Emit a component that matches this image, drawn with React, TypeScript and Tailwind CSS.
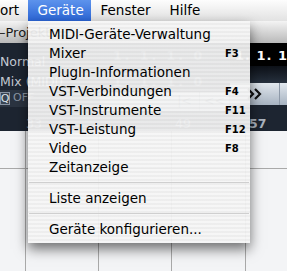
const font = "font-['DejaVu_Sans','Liberation_Sans',sans-serif]";

type MenuEntry = { label: string; key?: string } | 'sep';

const entries: MenuEntry[] = [
  { label: 'MIDI-Geräte-Verwaltung' },
  { label: 'Mixer', key: 'F3' },
  { label: 'PlugIn-Informationen' },
  { label: 'VST-Verbindungen', key: 'F4' },
  { label: 'VST-Instrumente', key: 'F11' },
  { label: 'VST-Leistung', key: 'F12' },
  { label: 'Video', key: 'F8' },
  { label: 'Zeitanzeige' },
  'sep',
  { label: 'Liste anzeigen' },
  'sep',
  { label: 'Geräte konfigurieren...' },
];

function MenuBar() {
  const item = 'h-full px-[9.5px] leading-[21px]';
  return (
    <div className="flex h-[21px] items-start bg-gradient-to-b from-[#fdfdfd] to-[#e2e2e2] text-[13.5px] text-black">
      <div className="h-full w-[28px] leading-[21px]">ort</div>
      <div className={`${item} h-[20px] w-[63px] bg-gradient-to-b from-[#5d93ec] to-[#2b65d6] text-center text-white`}>Geräte</div>
      <div className={item}>Fenster</div>
      <div className={item}>Hilfe</div>
    </div>
  );
}

function TitleBar() {
  return (
    <div className="flex h-[22px] items-center bg-gradient-to-b from-[#f4f4f4] to-[#b9b9b9] pt-[2px] text-[13px] text-[#1a1a1a]">
      <span className="-ml-[1px] whitespace-nowrap">–Projekt</span>
    </div>
  );
}

function TransportButton({ children, w }: { children: React.ReactNode; w: string }) {
  return (
    <div className={`flex h-full items-center justify-center border-r border-[#8d99a8] ${w}`}>{children}</div>
  );
}

function DarkBand() {
  return (
    <div className="flex h-[88px] bg-[#1d2531] text-[12.5px]">
      {/* left column */}
      <div className="flex w-[100px] flex-col text-[#c4cad3]">
        <div className="mt-[7px] h-[24px] whitespace-nowrap leading-[24px]">Normal</div>
        <div className="h-[16px] whitespace-nowrap leading-[16px]">Mix (MIDI)</div>
        <div className="flex h-[17px] items-center gap-[3px] bg-[#2b3441] text-[11px]">
          <span className="flex h-[13px] w-[10px] items-center justify-center border border-[#8793a3] bg-[#3a4553] leading-none text-[#dfe4ea]">Q</span>
          <span className="text-[#8c96a3]">OFF</span>
        </div>
        <div className="flex h-[24px] items-end pl-[26px] text-[#8e98a5]">
          <span className="leading-[14px]">33</span>
        </div>
      </div>
      {/* middle column, mostly under the menu */}
      <div className="flex flex-1 flex-col text-[#6f7a88]">
        <div className="mt-[4px] h-[18px] whitespace-nowrap pl-[13px] font-bold leading-[18px] tracking-[3px]">1. 1. 1. 0</div>
        <div className="h-[9px]" />
        <div className="h-[20px] whitespace-nowrap pl-[13px] font-bold leading-[20px] tracking-[3px]">1. 1. 1. 0</div>
        <div className="flex h-[22px] justify-end bg-gradient-to-b from-[#dfe5ec] to-[#aab6c3] text-[#5d6875]">
          <TransportButton w="w-[30px]">|&lt;</TransportButton>
          <TransportButton w="w-[30px]">&lt;&lt;</TransportButton>
        </div>
        <div className="flex h-[26px] items-end pl-[75px] text-[#8e98a5]">
          <span className="leading-[14px]">49</span>
        </div>
      </div>
      {/* right column */}
      <div className="flex w-[57px] flex-col">
        <div className="flex h-[23px] items-center overflow-hidden bg-black pl-[5px] pt-[3px] text-[13px] font-bold text-white">
          <span className="whitespace-nowrap tracking-[1px]">1. 1. 1.</span>
        </div>
        <div className="h-[17px] bg-gradient-to-b from-[#0d1118] to-[#27313e]" />
        <div className="flex h-[22px] bg-gradient-to-b from-[#e2e8ee] to-[#a7b3c1]">
          <TransportButton w="w-[50px]">
            <svg width="17" height="14" viewBox="0 0 17 14" fill="none" stroke="#111" strokeWidth="2.2">
              <path d="M2 2l5 5-5 5M9 2l5 5-5 5" />
            </svg>
          </TransportButton>
          <div className="flex-1" />
        </div>
        <div className="flex h-[26px] items-end pl-[19px] text-[#a9b2bd]">
          <span className="font-bold leading-[14px]">57</span>
        </div>
      </div>
    </div>
  );
}

function Grid() {
  const row = 'flex border-b border-[#a9a9a9]';
  const cell = 'w-[73px] shrink-0 border-r border-[#a9a9a9]';
  return (
    <div className="flex-1 bg-[#f3f4f6]">
      <div className={`${row} h-[38px]`}>
        <div className="w-[26px] shrink-0 border-r border-[#a9a9a9]" />
        <div className={cell} />
        <div className={cell} />
        <div className={`${cell} w-[74px]`} />
      </div>
      <div className="flex h-[102px]">
        <div className="w-[26px] shrink-0 border-r border-[#a9a9a9]" />
        <div className={cell} />
        <div className={cell} />
        <div className={`${cell} w-[74px]`} />
      </div>
    </div>
  );
}

function DropMenu() {
  return (
    <div className="absolute left-[28px] top-[21px] w-[222px] bg-[repeating-linear-gradient(to_bottom,rgba(246,246,246,0.94)_0px,rgba(246,246,246,0.94)_2px,rgba(237,237,237,0.94)_2px,rgba(237,237,237,0.94)_4px)] pb-[4.5px] pt-[3.5px] text-[13.5px] text-black shadow-[0_6px_12px_rgba(0,0,0,0.55)]">
      {entries.map((e, i) =>
        e === 'sep' ? (
          <div key={i} className="flex h-[12px] items-center px-[1px]">
            <div className="h-[1px] w-full bg-[#cfcfcf]" />
          </div>
        ) : (
          <div key={i} className="flex h-[19px] items-center pl-[21px]">
            <span className="flex-1 whitespace-nowrap">{e.label}</span>
            <span className="w-[25px] text-[10px] font-bold">{e.key}</span>
          </div>
        ),
      )}
    </div>
  );
}

export default function App() {
  return (
    <div className={`relative flex h-[271px] w-[287px] flex-col overflow-hidden bg-[#f3f4f6] ${font}`}>
      <MenuBar />
      <TitleBar />
      <DarkBand />
      <Grid />
      <DropMenu />
    </div>
  );
}
